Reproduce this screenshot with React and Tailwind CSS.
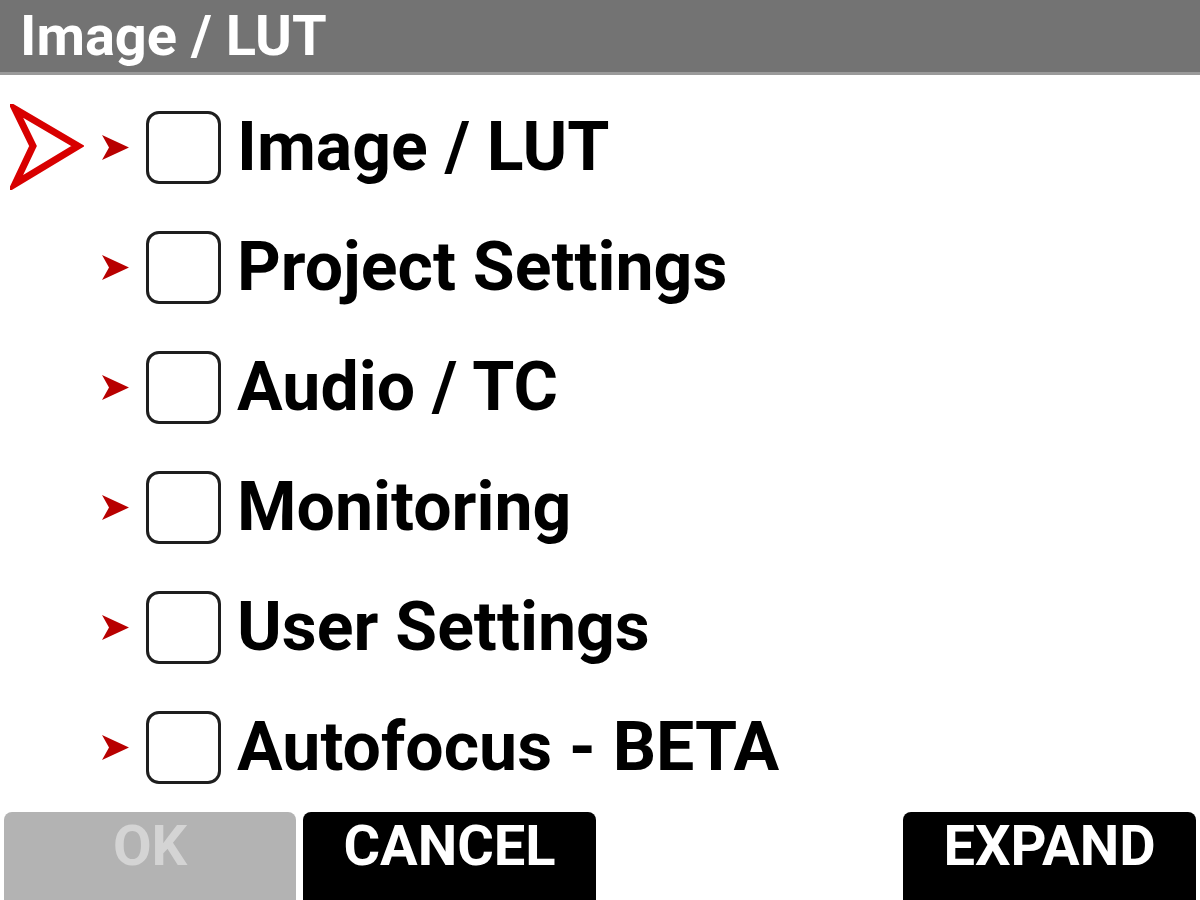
import React from 'react';

// 菜单项
const items = ['Image / LUT', 'Project Settings', 'Audio / TC', 'Monitoring', 'User Settings', 'Autofocus - BETA'];

function Cursor() {
  return (
    <svg width="74" height="86" viewBox="0 0 74 86">
      <polygon points="5,5 68,42 5,80 23,42" fill="none" stroke="#d80000" strokeWidth="7" strokeLinejoin="miter" />
    </svg>
  );
}

function SmallArrow() {
  return (
    <svg width="29" height="29" viewBox="0 0 29 29">
      <polygon points="1,2 28,14.5 1,27 8,14.5" fill="#b80000" />
    </svg>
  );
}

export default function App() {
  return (
    <div className="w-[1200px] h-[900px] bg-white flex flex-col font-['Roboto','Liberation_Sans',sans-serif] overflow-hidden">
      {/* 标题栏 */}
      <div className="h-[75px] shrink-0 bg-[#737373] border-b-[3px] border-[#9a9a9a] pl-[20px] pt-[8px]">
        <div className="text-white font-bold text-[56px] leading-none">Image / LUT</div>
      </div>

      {/* 列表 */}
      <div className="pt-[12px] flex flex-col">
        {items.map((label, i) => (
          <div key={label} className="h-[120px] flex items-center pl-[10px]">
            <div className="w-[74px] h-[86px] flex items-center">{i === 0 && <Cursor />}</div>
            <div className="ml-[17px]">
              <SmallArrow />
            </div>
            <div className="ml-[16px] w-[75px] h-[73px] rounded-[13px] border-[3px] border-[#1e1e1e] shrink-0" />
            <div className="ml-[16px] text-black font-bold text-[68px] leading-none whitespace-nowrap">{label}</div>
          </div>
        ))}
      </div>

      {/* 底部按钮 */}
      <div className="mt-auto h-[88px] flex px-[4px] gap-[7px]">
        <div className="w-[292px] bg-[#b3b3b3] rounded-t-[8px] flex justify-center pt-[6px]">
          <span className="text-[#d4d4d4] font-bold text-[56px] leading-none">OK</span>
        </div>
        <div className="w-[293px] bg-black rounded-t-[8px] flex justify-center pt-[6px]">
          <span className="text-white font-bold text-[56px] leading-none">CANCEL</span>
        </div>
        <div className="flex-1" />
        <div className="w-[293px] bg-black rounded-t-[8px] flex justify-center pt-[6px]">
          <span className="text-white font-bold text-[56px] leading-none">EXPAND</span>
        </div>
      </div>
    </div>
  );
}
